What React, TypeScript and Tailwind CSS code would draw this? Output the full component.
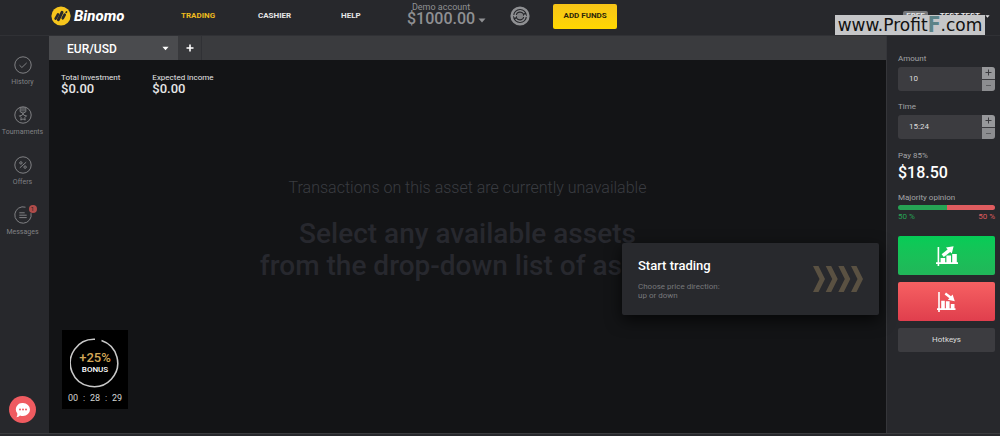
import React, { useState } from "react";

const money = (value: number) => `$${value.toFixed(2)}`;

interface SideItemProps {
    label: string;
    badge?: number;
    children: React.ReactNode;
}

function SideItem({ label, badge, children }: SideItemProps) {
    return (
        <li>
            <a href="#" className="flex h-[50px] w-full flex-col items-center text-[#808184]">
                <span className="relative">
                    <svg viewBox="0 0 18 18" className="size-[18px]" fill="none" stroke="currentColor" strokeWidth="1">
                        {children}
                    </svg>
                    {badge && (
                        <span className="absolute -top-px -right-[5px] flex size-2 items-center justify-center rounded-full bg-[#b04c4a] text-[6px] leading-none text-[#2a1c1e]">
                            {badge}
                        </span>
                    )}
                </span>
                <span className="mt-1 text-[7px] leading-[8px]">{label}</span>
            </a>
        </li>
    );
}

interface StepperProps {
    id: string;
    label: string;
    value: string;
    onChange: (value: string) => void;
    onStep: (delta: number) => void;
}

function Stepper({ id, label, value, onChange, onStep }: StepperProps) {
    return (
        <div>
            <label htmlFor={id} className="block text-[8px] leading-[10px] text-[#a3a4a7]">
                {label}
            </label>
            <div className="mt-[3px] flex h-6 overflow-hidden rounded-[3px] bg-[#3c3c40]">
                <input
                    id={id}
                    value={value}
                    onChange={(e) => onChange(e.target.value)}
                    className="w-full min-w-0 flex-1 bg-transparent pl-[11px] text-[8px] text-[#dcdcdd] outline-none"
                />
                <div className="flex w-[13px] flex-col gap-px">
                    <button type="button" aria-label={`Increase ${label}`} onClick={() => onStep(1)} className="flex flex-1 items-center justify-center bg-[#97989b] text-[#3c3c40]">
                        <svg viewBox="0 0 7 7" className="size-[7px]" stroke="currentColor">
                            <path d="M0.5 3.5h6M3.5 0.5v6" />
                        </svg>
                    </button>
                    <button type="button" aria-label={`Decrease ${label}`} onClick={() => onStep(-1)} className="flex flex-1 items-center justify-center bg-[#8c8d90] text-[#5c5d60]">
                        <svg viewBox="0 0 7 7" className="size-[7px]" stroke="currentColor">
                            <path d="M1 3.5h5" />
                        </svg>
                    </button>
                </div>
            </div>
        </div>
    );
}

function Caret({ className }: { className: string }) {
    return (
        <svg viewBox="0 0 8 5" className={className} fill="currentColor">
            <path d="M0.5 0.5h7L4 4.5z" />
        </svg>
    );
}

function Header() {
    return (
        <header className="relative flex h-9 shrink-0 items-center border-b border-[#303135] bg-[#27282c]">
            <a href="#" className="ml-[51px] flex w-[130px] items-center gap-[3px] pb-[3px]">
                <svg viewBox="0 0 20 20" className="size-5">
                    <circle cx="10" cy="10" r="9.6" fill="#f6c51d" />
                    <g stroke="#27282c" strokeLinecap="round" fill="none">
                        <path d="M4.6 12.6L7 8.4" strokeWidth="2.6" />
                        <path d="M7.4 13.6L11 6.4" strokeWidth="3" />
                        <path d="M11.8 12.2L13.6 8.8" strokeWidth="2.8" />
                        <path d="M15.2 6.4L15.5 5.9" strokeWidth="1.8" />
                    </g>
                </svg>
                <span className="text-[15px] leading-5 font-extrabold text-white italic">Binomo</span>
            </a>

            <nav className="flex items-center pb-[3px] text-[8px] leading-3 font-bold text-[#e6e6e7]">
                <a href="#" className="w-[77px] text-[#eebb1e]">TRADING</a>
                <a href="#" className="w-[83px]">CASHIER</a>
                <a href="#" className="w-[66px]">HELP</a>
            </nav>

            <button type="button" className="flex items-end gap-[3px] pb-[6px] text-[#8f9093]">
                <span className="flex flex-col items-center">
                    <span className="text-[9px] leading-2">Demo account</span>
                    <span className="text-[16px] leading-4 font-medium">$1000.00</span>
                </span>
                <Caret className="mb-1 h-[5px] w-2" />
            </button>

            <button type="button" aria-label="Refresh balance" className="ml-6 pb-[3px]">
                <svg viewBox="0 0 20 20" className="size-5" fill="none" stroke="#8f9093">
                    <circle cx="10" cy="10" r="8.3" strokeWidth="2.6" />
                    <circle cx="10" cy="10" r="3.2" fill="#808184" stroke="none" />
                    <path d="M5 9.4A5.1 5.1 0 0 1 14.4 7.2M15 10.6A5.1 5.1 0 0 1 5.6 12.8" strokeWidth="1.4" />
                    <path d="M2.6 9h4.8L5 12zM17.4 11h-4.8L15 8z" fill="#8f9093" stroke="none" />
                </svg>
            </button>

            <button type="button" className="mb-[3px] ml-[23px] h-[25px] w-16 rounded-[2px] bg-linear-to-b from-[#f6c417] to-[#ffd800] text-[8px] font-bold text-[#2d2708]">
                ADD FUNDS
            </button>

            <div className="mr-[10px] ml-auto flex items-center gap-3 pb-[3px] text-[8px] font-bold text-[#e6e6e7]">
                <span className="rounded-[2px] bg-[#77787b] px-[3px] leading-[10px]">FREE</span>
                <button type="button" className="flex items-center gap-[5px]">
                    TEST TEST
                    <Caret className="h-[3px] w-[5px]" />
                </button>
            </div>

            <div className="absolute top-[15px] right-[15px] z-20 flex h-5 w-[150px] items-center justify-center bg-[#c5c6c8] pb-px font-['DejaVu_Sans',sans-serif] text-[17px] leading-5 text-[#111]">
                <span className="flex items-center">
                    www.Profit
                    <span className="font-['DejaVu_Sans_Condensed','DejaVu_Sans',sans-serif] text-[21px] leading-5 font-bold text-[#5c8388]">F</span>
                    .com
                </span>
            </div>
        </header>
    );
}

function Sidebar() {
    return (
        <aside className="flex w-[49px] shrink-0 flex-col bg-[#27282c] pt-5 pr-1">
            <ul>
                <SideItem label="History">
                    <circle cx="9" cy="9" r="8.2" />
                    <path d="M5.5 9.2l2.4 2.3 4.8-4.6" />
                </SideItem>
                <SideItem label="Tournaments">
                    <circle cx="9" cy="9" r="8.2" />
                    <path d="M6.2 1.2v4.6L9 7.2l2.8-1.4V1.2M8 1v4.5M10 1v4.5" />
                    <path d="M9 7.2l1.1 2.3 2.5.3-1.8 1.8.4 2.5L9 12.9l-2.2 1.2.4-2.5-1.8-1.8 2.5-.3z" />
                </SideItem>
                <SideItem label="Offers">
                    <circle cx="9" cy="9" r="8.2" />
                    <path d="M12.2 6.2l-6.4 5.6" />
                    <circle cx="6.9" cy="6.9" r="1.2" />
                    <circle cx="11.1" cy="11.1" r="1.2" />
                </SideItem>
                <SideItem label="Messages" badge={1}>
                    <path d="M11.5 1.2A8.2 8.2 0 1 0 17 7.2" />
                    <path d="M5.3 6.8h5.4M5.3 9.2h7.4M5.3 11.6h7.4" />
                </SideItem>
            </ul>
            <button type="button" aria-label="Open chat" className="mt-auto mb-[10px] flex size-[27px] items-center justify-center self-center rounded-full bg-[#ef5b60]">
                <svg viewBox="0 0 16 16" className="size-4">
                    <path d="M8 1a7 6.5 0 0 1 0 13q-1.6 0-3-.6Q3.8 15 1.4 15.2 2.5 13.8 2.3 11.5A6.5 6.5 0 0 1 8 1z" fill="#fff" />
                    <g fill="#ef5b60">
                        <circle cx="5" cy="7.6" r="1" />
                        <circle cx="8" cy="7.6" r="1" />
                        <circle cx="11" cy="7.6" r="1" />
                    </g>
                </svg>
            </button>
        </aside>
    );
}

function AssetTabs() {
    return (
        <div className="flex h-6 shrink-0 bg-[#3a3b3e]">
            <div className="relative w-[129px] bg-[#4a4b4e] text-white">
                <select aria-label="Asset" className="h-full w-full appearance-none bg-transparent pl-[18px] text-[12px] font-medium outline-none">
                    <option>EUR/USD</option>
                </select>
                <Caret className="pointer-events-none absolute top-[10px] right-[9px] h-[5px] w-[7px]" />
            </div>
            <button type="button" aria-label="Add asset" className="flex w-6 items-center justify-center border-r border-[#303135] bg-[#38393c] text-white">
                <svg viewBox="0 0 8 8" className="size-2" stroke="currentColor" strokeWidth="1.6">
                    <path d="M4 0.5v7M0.5 4h7" />
                </svg>
            </button>
        </div>
    );
}

function Stat({ label, value }: { label: string; value: number }) {
    return (
        <div>
            <dt className="text-[8px] leading-[11px]">{label}</dt>
            <dd className="text-[13px] leading-3 font-medium">{money(value)}</dd>
        </div>
    );
}

function Bonus() {
    return (
        <div className="flex h-[79px] w-[66px] flex-col items-center bg-black pt-2">
            <div className="relative flex size-[50px] flex-col items-center justify-center">
                <svg viewBox="0 0 50 50" className="absolute inset-0" fill="none">
                    <path d="M31.5 2.5A23.7 23.7 0 1 1 25 1.3" stroke="#c9c9c9" strokeWidth="1.6" />
                </svg>
                <span className="text-[13px] leading-[14px] font-medium text-[#d3a757]">+25%</span>
                <span className="text-[8px] leading-[10px] font-medium text-white">BONUS</span>
            </div>
            <div className="mt-1 flex w-[54px] justify-between text-[9px] leading-3 text-[#d4d4d4]">
                <span>00</span>
                <span>:</span>
                <span>28</span>
                <span>:</span>
                <span>29</span>
            </div>
        </div>
    );
}

function StartCard() {
    return (
        <div className="absolute right-[7px] bottom-[118px] flex h-[72px] w-[257px] items-center justify-between rounded-[2px] bg-[#28292d] pr-4 pl-4 shadow-[0_5px_16px_rgba(0,0,0,0.7)]">
            <div>
                <h2 className="text-[13px] leading-4 font-medium text-white">Start trading</h2>
                <p className="mt-2 text-[8px] leading-[9px] text-[#77787b]">
                    Choose price direction:
                    <br />
                    up or down
                </p>
            </div>
            <svg viewBox="0 0 50 26" className="h-[26px] w-[50px]" fill="#5a5142">
                <path d="M0 0h5.500l6.500 13-6.500 13H0l6.500-13z" />
                <path d="M12.700 0h5.500l6.500 13-6.500 13h-5.500l6.500-13z" />
                <path d="M25.300 0h5.500l6.500 13-6.500 13h-5.500l6.500-13z" />
                <path d="M38 0h5.500L50 13l-6.500 13H38l6.500-13z" />
            </svg>
        </div>
    );
}

function TradePanel() {
    const [amount, setAmount] = useState("10");
    const [time, setTime] = useState("15:24");

    const stepTime = (delta: number) => {
        const [h, m] = time.split(":").map(Number);
        const total = (h * 60 + m + delta + 1440) % 1440;
        setTime(`${String(Math.floor(total / 60)).padStart(2, "0")}:${String(total % 60).padStart(2, "0")}`);
    };

    return (
        <aside className="flex w-[114px] shrink-0 flex-col border-l border-[#35363a] bg-[#27282c] pt-[18px] pr-[5px] pl-[11px]">
            <div className="flex flex-col gap-[11px]">
                <Stepper id="amount" label="Amount" value={amount} onChange={setAmount} onStep={(d) => setAmount(String(Number(amount) + d))} />
                <Stepper id="time" label="Time" value={time} onChange={setTime} onStep={stepTime} />
            </div>

            <p className="mt-3 text-[8px] leading-[10px] text-[#a3a4a7]">Pay 85%</p>
            <p className="mt-[2px] text-[16px] leading-5 font-medium text-white">{money(18.5)}</p>

            <p className="mt-[10px] text-[8px] leading-[10px] text-[#a3a4a7]">Majority opinion</p>
            <div className="mt-[2px] flex h-[5px] overflow-hidden rounded-full">
                <div className="flex-1 bg-[#26a354]" />
                <div className="flex-1 bg-[#df5c5f]" />
            </div>
            <div className="mt-[2px] flex justify-between text-[8px] leading-[10px]">
                <span className="text-[#26a354]">50 %</span>
                <span className="text-[#df5c5f]">50 %</span>
            </div>

            <button type="button" aria-label="Up" className="mt-[14px] flex h-[39px] shrink-0 items-center justify-center rounded-[2px] bg-linear-to-b from-[#05cc56] to-[#21b659]">
                <svg viewBox="0 0 22 20" className="h-5 w-[22px]" fill="#fff">
                    <path d="M1.6 1h1.6v15.2H22V18H3.2v2H1.6v-2H0v-1.8h1.6z" />
                    <path d="M4.6 12h4.6v5H4.6zM10.4 9.5H15V17h-4.6zM16.2 8h4.6v9h-4.6z" />
                    <path d="M5.6 8.2L11.6 3.4 10 1.6 17.6.2 15.8 7.6 14.2 6 7.8 11z" />
                </svg>
            </button>
            <button type="button" aria-label="Down" className="mt-[7px] flex h-[39px] shrink-0 items-center justify-center rounded-[2px] bg-linear-to-b from-[#f66062] to-[#e03e4d]">
                <svg viewBox="0 0 19 20" className="h-5 w-[19px]" fill="#fff">
                    <path d="M1.2 0h1.6v16.2h15.7V18H2.8v2H1.2v-2H0v-1.8h1.2z" />
                    <path d="M4.2 8.8h3.6V17H4.2zM8.9 9.3h3.7V17H8.900zM13.8 12h3.700v5h-3.700z" />
                    <path d="M9 .6l5 3.600L15.600 2.600 17.800 9.200l-7-1.400 1.600-1.600L7.600 2.600z" />
                </svg>
            </button>
            <button type="button" className="mt-[7px] h-6 shrink-0 rounded-[2px] bg-[#3c3c40] text-[8px] text-[#dcdcdd]">
                Hotkeys
            </button>
        </aside>
    );
}

export default function App() {
    return (
        <div className="flex min-h-screen flex-col bg-[#27282c] font-[Roboto,sans-serif]">
            <Header />

            <div className="flex flex-1">
                <Sidebar />

                <main className="relative flex min-w-0 flex-1 flex-col bg-[#131416]">
                    <AssetTabs />

                    <dl className="flex gap-8 pt-3 pl-3 text-[#e6e6e7]">
                        <Stat label="Total investment" value={0} />
                        <Stat label="Expected income" value={0} />
                    </dl>

                    <div className="mt-[83px] text-center">
                        <p className="text-[16px] leading-5 font-light text-[#3a3c41]">Transactions on this asset are currently unavailable</p>
                        <p className="mt-5 text-[28px] leading-8 font-medium text-[#27282e]">
                            Select any available assets
                            <br />
                            from the drop-down list of assets
                        </p>
                    </div>

                    <div className="mt-auto pb-6 pl-[13px]">
                        <Bonus />
                    </div>

                    <StartCard />
                </main>

                <TradePanel />
            </div>

            <footer className="h-[3px] shrink-0 border-t border-[#3a3b3e] bg-[#27282c]" />
        </div>
    );
}
